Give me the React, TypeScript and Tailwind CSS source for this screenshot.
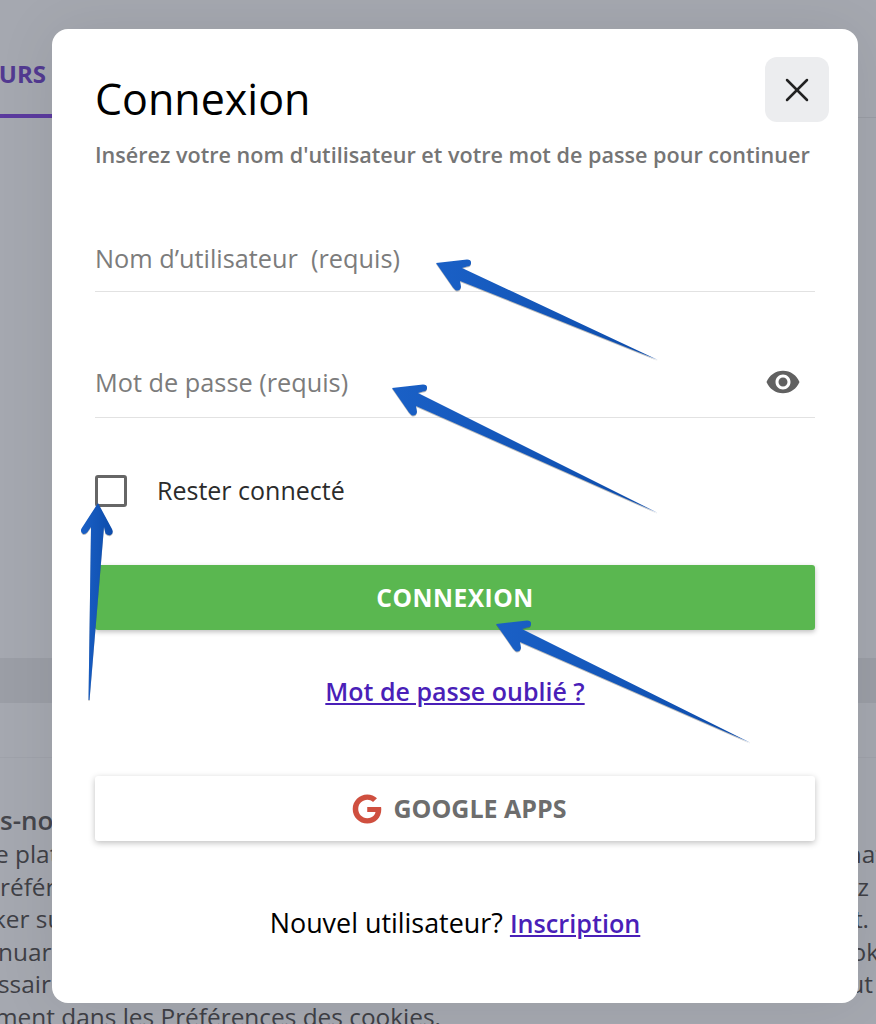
import { FaGoogle } from "react-icons/fa";
import { MdVisibility } from "react-icons/md";
import { X } from "lucide-react";

const cookieLines = [
  { left: "e plat", right: "nat", leftClass: "-ml-[5px]", rightClass: "-mr-[8px]" },
  { left: "référ", right: "z", leftClass: "ml-0", rightClass: "mr-[7px]" },
  { left: "ker su", right: "t.", leftClass: "-ml-[7px]", rightClass: "mr-[7px]" },
  { left: "nuar", right: "ok", leftClass: "-ml-[2px]", rightClass: "-mr-[3px]" },
  { left: "ssair", right: "ut", leftClass: "-ml-[2px]", rightClass: "mr-[3px]" },
];

function Backdrop() {
  return (
    <div className="flex h-[1024px] flex-col overflow-hidden bg-[#a5a8b0] font-['Open_Sans',sans-serif]">
      {/* Tabs */}
      <div className="flex h-[118px] shrink-0 border-b border-[#9a9da5]">
        <div className="flex h-[118px] w-[52px] items-start justify-end border-b-4 border-[#5b3a9e] pr-[6px] pt-[56px]">
          <span className="text-[24px] font-bold leading-[36px] text-[#523a91]">URS</span>
        </div>
      </div>
      <div className="h-[540px] shrink-0" />
      <div className="h-[45px] shrink-0 bg-[#9b9ea6]" />
      <div className="h-[55px] shrink-0 border-b border-[#9fa2aa]" />
      {/* Cookie text */}
      <div className="pt-[44px] text-[#3f4046]">
        <div className="h-[36px] text-[26px] font-semibold leading-[36px] text-[#45464c]">s-nous</div>
        {cookieLines.map((line) => (
          <div key={line.left} className="flex h-[32.5px] justify-between text-[24.4px] leading-[32.5px]">
            <span className={line.leftClass}>{line.left}</span>
            <span className={line.rightClass}>{line.right}</span>
          </div>
        ))}
        <div className="-ml-[5px] whitespace-nowrap text-[24.4px] leading-[32.5px]">
          ment dans les Préférences des cookies.
        </div>
      </div>
    </div>
  );
}

function Arrows() {
  return (
    <svg
      className="pointer-events-none absolute left-0 top-0 drop-shadow-[0_1px_0_rgba(60,60,60,0.35)]"
      width="876"
      height="1024"
      viewBox="0 0 876 1024"
      fill="none"
    >
      <defs>
        <linearGradient id="arrowFill" x1="0" y1="0" x2="1" y2="0">
          <stop offset="0" stopColor="#1a60c6" />
          <stop offset="1" stopColor="#0d4cab" />
        </linearGradient>
      </defs>
      <g fill="url(#arrowFill)">
        <path d="M436 263 L467 259.5 Q471.5 259.5 471 263.5 Q470.5 266.5 467 266.5 L462 268 L658 360 L460 281 L461 287 Q460 291 456.5 290.5 Q455 290 453 287.5 Z" />
        <path d="M392 388 L423 384.5 Q427.5 384.5 427 388.5 Q426.5 391.5 423 391.5 L418 393 L658 513 L416 406 L417 412 Q416 416 412.5 415.5 Q411 415 409 412.5 Z" />
        <path d="M98 503 L112 529 Q114 533 110.5 535 Q108 536 105.5 533.5 L104 527 L89.5 700 L88.5 700 L91 527 L87.5 532 Q85 535 82.5 533.5 Q80 531.5 81.5 528.5 Z" />
        <path d="M496 624 L527 620.5 Q531.5 620.5 531 624.5 Q530.5 627.5 527 627.5 L522 629 L751 743 L520 642 L521 648 Q520 652 516.5 651.5 Q515 651 513 648.5 Z" />
      </g>
    </svg>
  );
}

export default function App() {
  return (
    <div className="relative h-[1024px] w-[876px] overflow-hidden">
      <Backdrop />

      {/* Login modal */}
      <div className="absolute left-[52px] top-[29px] flex h-[974px] w-[806px] flex-col rounded-[16px] bg-white px-[43px] font-['Open_Sans',sans-serif] shadow-[0_0_60px_rgba(0,0,0,0.08)]">
        <button className="absolute right-[29px] top-[28px] flex h-[65px] w-[64px] items-center justify-center rounded-[12px] bg-[#ecedef] text-[#222]">
          <X className="h-[40px] w-[40px]" strokeWidth={1.5} />
        </button>

        <h1 className="mt-[39px] text-[43px] font-medium leading-[62px] text-black">Connexion</h1>
        <p className="mt-[10px] whitespace-nowrap text-[21.6px] font-semibold leading-[30px] text-[#757575]">
          Insérez votre nom d'utilisateur et votre mot de passe pour continuer
        </p>

        <div className="mt-[61px] flex h-[61px] items-start border-b border-[#e2e2e2] pt-[10px]">
          <input
            className="h-[36px] w-full text-[25.3px] outline-none placeholder:text-[#7c7c7c]"
            placeholder={"Nom d’utilisateur \u00a0(requis)"}
          />
        </div>

        <div className="mt-[63px] flex h-[63px] items-start justify-between border-b border-[#e2e2e2] pt-[10px]">
          <input
            className="h-[36px] w-full text-[25.3px] outline-none placeholder:text-[#7c7c7c]"
            placeholder="Mot de passe (requis)"
          />
          <MdVisibility className="mr-[14px] -mt-[1px] shrink-0 text-[#616161]" size={36} />
        </div>

        <label className="mt-[57px] flex h-[32px] items-center gap-[30px]">
          <span className="h-[32px] w-[32px] rounded-[3px] border-[3px] border-[#666]" />
          <span className="text-[25px] text-[#2b2b2b]">Rester connecté</span>
        </label>

        <button className="mt-[58px] h-[65px] w-full rounded-[3px] bg-[#5ab750] pt-[2px] text-[24.6px] font-bold tracking-[0.02em] text-white shadow-[0_2px_5px_rgba(0,0,0,0.25)]">
          CONNEXION
        </button>

        <a className="mt-[44px] self-center text-[25px] font-semibold leading-[34px] text-[#4a1fb8] underline" href="#">
          Mot de passe oublié ?
        </a>

        <button className="mt-[68px] flex h-[65px] w-full items-center justify-center gap-[11px] rounded-[3px] bg-white pl-[9px] text-[25px] font-bold text-[#6d6d6d] shadow-[0_2px_6px_rgba(0,0,0,0.25)]">
          <FaGoogle className="text-[#cf4f3f]" size={30} />
          GOOGLE APPS
        </button>

        <p className="mt-[63px] self-center text-[26.9px] leading-[38px] text-black">
          Nouvel utilisateur?{" "}
          <a className="text-[25.2px] font-semibold text-[#4a1fb8] underline" href="#">
            Inscription
          </a>
        </p>
      </div>

      <Arrows />
    </div>
  );
}
